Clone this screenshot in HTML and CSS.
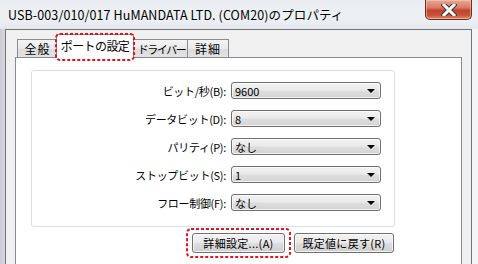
FILE: index.html
```html
<!DOCTYPE html>
<html lang="ja">
<head>
    <meta charset="UTF-8">
    <title>USB-003/010/017 HuMANDATA LTD. (COM20)のプロパティ</title>
    <link rel="stylesheet" href="styles.css">
</head>
<body>
    <div class="window">
        <div class="titlebar">
            <span class="title">USB-003/010/017 HuMANDATA LTD. (COM20)のプロパティ</span>
            <div class="close-btn">
                <svg width="16" height="12" viewBox="0 0 16 12">
                    <path d="M3 1 L13 11 M13 1 L3 11" stroke="#3a3a3a" stroke-width="5" stroke-linecap="square" fill="none"/>
                    <path d="M3 1 L13 11 M13 1 L3 11" stroke="#fff" stroke-width="3" stroke-linecap="square" fill="none"/>
                </svg>
            </div>
        </div>

        <div class="client">
            <div class="tabs">
                <div class="tab tab-general">全般</div>
                <div class="tab tab-active">
                    ポートの設定
                    <svg class="dash"><rect/></svg>
                </div>
                <div class="tab tab-driver">ドライバー</div>
                <div class="tab tab-detail">詳細</div>
            </div>

            <div class="panel">
                <div class="groupbox">
                    <label class="field-label">ビット/秒(B):</label>
                    <div class="combo"><span>9600</span><i class="arrow"></i></div>

                    <label class="field-label">データビット(D):</label>
                    <div class="combo"><span>8</span><i class="arrow"></i></div>

                    <label class="field-label">パリティ(P):</label>
                    <div class="combo"><span>なし</span><i class="arrow"></i></div>

                    <label class="field-label">ストップビット(S):</label>
                    <div class="combo"><span>1</span><i class="arrow"></i></div>

                    <label class="field-label">フロー制御(F):</label>
                    <div class="combo"><span>なし</span><i class="arrow"></i></div>
                </div>

                <div class="button-row">
                    <div class="mark">
                        <button class="btn btn-advanced">詳細設定...(A)</button>
                        <svg class="dash"><rect/></svg>
                    </div>
                    <button class="btn btn-default">既定値に戻す(R)</button>
                </div>
            </div>
        </div>
    </div>
</body>
</html>
```

FILE: styles.css
```css
* {
    margin: 0;
    padding: 0;
    box-sizing: border-box;
}

body {
    font-family: "Noto Sans CJK JP", "Liberation Sans", sans-serif;
    font-size: 11px;
    color: #000;
    background: #fff;
    width: 478px;
    height: 264px;
    overflow: hidden;
}

.window {
    width: 478px;
    height: 264px;
    display: flex;
    flex-direction: column;
    background: linear-gradient(90deg, #c9cdd1 0px, #d6dadd 5px, #eef1f4 30%, #e7ecf0 70%, #f3f5f7 100%);
}

/* title bar */
.titlebar {
    height: 29px;
    display: flex;
    justify-content: space-between;
    align-items: flex-start;
    background: linear-gradient(180deg, #e9edf1 0%, #eef1f4 60%, #e4e9ee 100%);
}

.title {
    font-size: 12.5px;
    padding: 5px 0 0 8px;
    color: #000;
    white-space: nowrap;
    letter-spacing: 0.1px;
}

.close-btn {
    width: 47px;
    height: 20px;
    margin-right: 6px;
    border: 1px solid #6b2c22;
    border-top: none;
    border-radius: 0 0 5px 5px;
    background: linear-gradient(180deg, #e9a898 0%, #d97a64 40%, #c2432c 55%, #c9533a 80%, #de8a6e 100%);
    box-shadow: inset 0 0 0 1px rgba(255, 210, 200, 0.5);
    display: flex;
    align-items: center;
    justify-content: center;
}

/* client area */
.client {
    flex: 1;
    margin: 0 6px 0 5px;
    background: #f0f0f0;
    border: 1px solid #707378;
    border-bottom: none;
    padding: 0 9px;
    display: flex;
    flex-direction: column;
}

.tabs {
    height: 27px;
    display: flex;
    align-items: flex-end;
    padding-left: 2px;
    position: relative;
    z-index: 1;
}

.tab {
    height: 18px;
    border: 1px solid #898c95;
    border-bottom: none;
    background: linear-gradient(180deg, #f4f4f4 0%, #eaeaea 50%, #dcdcdc 51%, #e3e3e3 100%);
    font-size: 12px;
    display: flex;
    align-items: center;
    justify-content: center;
    white-space: nowrap;
}

.tab-general {
    width: 41px;
    letter-spacing: 1px;
}

.tab-active {
    width: 78px;
    height: 24px;
    margin: 0 0 -1px -2px;
    padding-bottom: 2px;
    background: #fff;
    letter-spacing: -0.6px;
    position: relative;
    z-index: 2;
}

.tab-driver {
    width: 55px;
    margin-left: -1px;
    padding-left: 3px;
    border-left: none;
    font-size: 11px;
    letter-spacing: -1.5px;
}

.tab-detail {
    width: 41px;
    border-left: none;
    letter-spacing: 1px;
}

/* red dashed marks drawn over the controls */
.dash {
    position: absolute;
    left: -3px;
    top: -3px;
    width: calc(100% + 6px);
    height: calc(100% + 6px);
    overflow: visible;
    pointer-events: none;
}

.dash rect {
    x: 1px;
    y: 1px;
    width: calc(100% - 2px);
    height: calc(100% - 2px);
    rx: 4px;
    fill: none;
    stroke: #e8101a;
    stroke-width: 2px;
    stroke-dasharray: 3 2;
}

.tab-active .dash {
    left: -2px;
    top: -2px;
    width: calc(100% + 4px);
    height: calc(100% + 5px);
}

.panel {
    flex: 1;
    background: #fff;
    border: 1px solid #898c95;
    border-bottom: none;
    padding: 12px 0 0 15px;
}

/* group box with the port fields */
.groupbox {
    width: 364px;
    border: 1px solid #d5dfe5;
    border-radius: 3px;
    padding: 11px 0 15px;
    display: grid;
    grid-template-columns: 194px 150px;
    column-gap: 5px;
    row-gap: 11px;
    align-items: center;
}

.field-label {
    text-align: right;
    font-size: 11px;
    letter-spacing: -0.3px;
    white-space: nowrap;
}

.combo {
    height: 17px;
    border: 1px solid #707070;
    border-radius: 3px;
    background: linear-gradient(180deg, #f2f2f2 0%, #ebebeb 45%, #dddddd 55%, #d3d3d3 100%);
    box-shadow: inset 0 0 0 1px rgba(255, 255, 255, 0.7);
    display: flex;
    align-items: center;
    justify-content: space-between;
    padding: 0 4px 0 3px;
    font-size: 11px;
}

.arrow {
    width: 0;
    height: 0;
    border-left: 4px solid transparent;
    border-right: 4px solid transparent;
    border-top: 4px solid #000;
    margin-right: 1px;
}

/* buttons */
.button-row {
    width: 364px;
    margin-top: 6px;
    padding-right: 1px;
    display: flex;
    justify-content: flex-end;
    gap: 9px;
}

.mark {
    position: relative;
}

.mark .dash {
    left: -6px;
    top: -5px;
    width: calc(100% + 12px);
    height: calc(100% + 10px);
}

.btn {
    height: 20px;
    border: 1px solid #707070;
    border-radius: 3px;
    background: linear-gradient(180deg, #f2f2f2 0%, #ebebeb 45%, #dddddd 55%, #cfcfcf 100%);
    box-shadow: inset 0 0 0 1px rgba(255, 255, 255, 0.7);
    font-family: inherit;
    font-size: 11px;
    display: flex;
    align-items: center;
    justify-content: center;
    letter-spacing: 0.3px;
}

.btn-advanced {
    width: 93px;
}

.btn-default {
    width: 100px;
}
```
